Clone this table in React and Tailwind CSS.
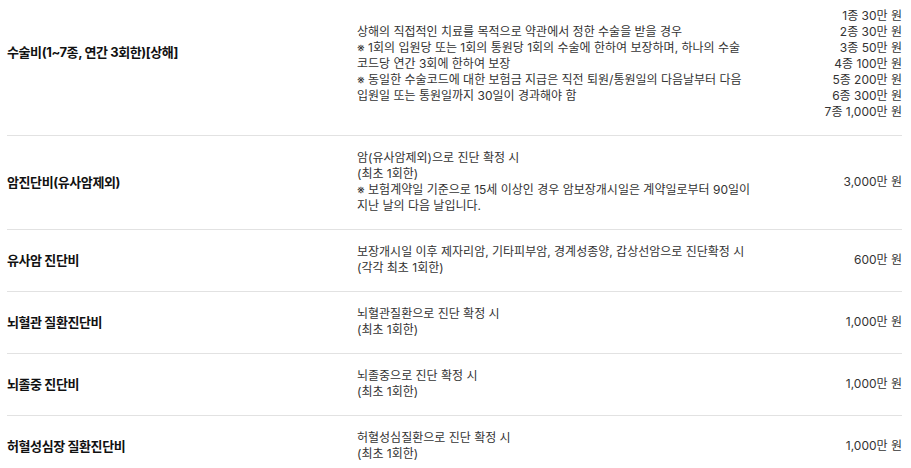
const rows = [
  {
    title: "수술비(1~7종, 연간 3회한)[상해]",
    desc: [
      "상해의 직접적인 치료를 목적으로 약관에서 정한 수술을 받을 경우",
      "※ 1회의 입원당 또는 1회의 통원당 1회의 수술에 한하여 보장하며, 하나의 수술 코드당 연간 3회에 한하여 보장",
      "※ 동일한 수술코드에 대한 보험금 지급은 직전 퇴원/통원일의 다음날부터 다음 입원일 또는 통원일까지 30일이 경과해야 함",
    ],
    amounts: ["1종 30만 원", "2종 30만 원", "3종 50만 원", "4종 100만 원", "5종 200만 원", "6종 300만 원", "7종 1,000만 원"],
    first: true,
  },
  {
    title: "암진단비(유사암제외)",
    desc: [
      "암(유사암제외)으로 진단 확정 시",
      "(최초 1회한)",
      "※ 보험계약일 기준으로 15세 이상인 경우 암보장개시일은 계약일로부터 90일이 지난 날의 다음 날입니다.",
    ],
    amounts: ["3,000만 원"],
  },
  {
    title: "유사암 진단비",
    desc: ["보장개시일 이후 제자리암, 기타피부암, 경계성종양, 갑상선암으로 진단확정 시", "(각각 최초 1회한)"],
    amounts: ["600만 원"],
  },
  {
    title: "뇌혈관 질환진단비",
    desc: ["뇌혈관질환으로 진단 확정 시", "(최초 1회한)"],
    amounts: ["1,000만 원"],
  },
  {
    title: "뇌졸중 진단비",
    desc: ["뇌졸중으로 진단 확정 시", "(최초 1회한)"],
    amounts: ["1,000만 원"],
  },
  {
    title: "허혈성심장 질환진단비",
    desc: ["허혈성심질환으로 진단 확정 시", "(최초 1회한)"],
    amounts: ["1,000만 원"],
  },
];

const Row = ({ row }) => (
  <div
    className={`grid grid-cols-[350px_418px_1fr] items-center border-b border-[#e2e2e2] ${
      row.first ? "pt-[8px] pb-[15px]" : "pt-[14px] pb-[15px]"
    }`}
  >
    <div className={`text-[13px] leading-[16px] font-bold text-[#111] tracking-[-0.4px] ${row.first ? "pb-6" : ""}`}>
      {row.title}
    </div>
    <div className="text-[12px] leading-[16px] text-[#333] break-keep">
      {row.desc.map((d, i) => (
        <p key={i}>{d}</p>
      ))}
    </div>
    <div className="text-[12px] leading-[16px] text-[#333] text-right">
      {row.amounts.map((a, i) => (
        <p key={i}>{a}</p>
      ))}
    </div>
  </div>
);

export default function App() {
  return (
    <div
      className="w-[911px] h-[468px] overflow-hidden bg-white pl-[7px] pr-[9px]"
      style={{ fontFamily: 'Inter, "Noto Sans CJK KR", sans-serif' }}
    >
      {rows.map((r, i) => (
        <Row key={i} row={r} />
      ))}
    </div>
  );
}
